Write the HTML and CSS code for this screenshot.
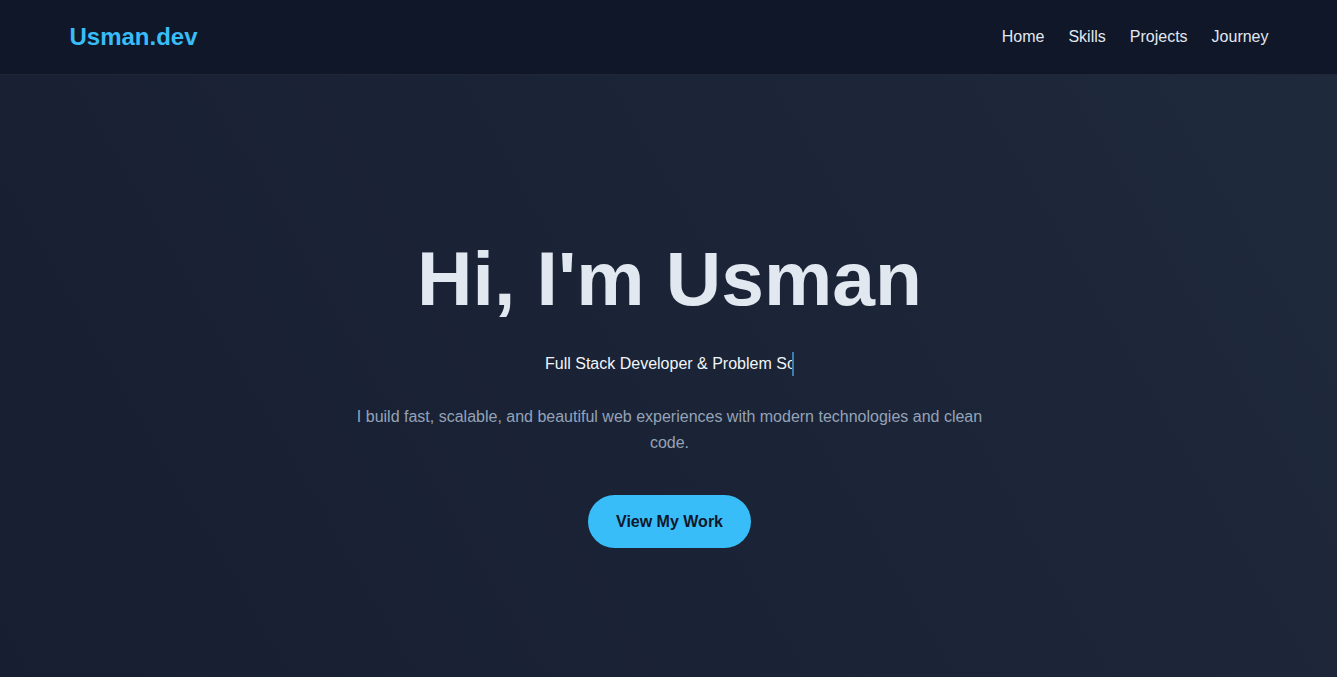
FILE: index.html
```html
<!DOCTYPE html>
<html lang="en">
<head>
    <meta charset="UTF-8">
    <meta name="viewport" content="width=device-width, initial-scale=1.0">
    <title>Usman.dev</title>
    <link rel="stylesheet" href="styles.css">
</head>
<body>
    <header class="site-header">
        <div class="container header-inner">
            <a href="#home" class="logo">Usman.dev</a>
            <nav class="nav">
                <a href="#home">Home</a>
                <a href="#skills">Skills</a>
                <a href="#projects">Projects</a>
                <a href="#journey">Journey</a>
            </nav>
        </div>
    </header>

    <main>
        <section id="home" class="hero">
            <h1 class="hero-title">Hi, I'm Usman</h1>
            <p class="hero-role"><span class="typing">Full Stack Developer &amp; Problem Solver</span></p>
            <p class="hero-text">I build fast, scalable, and beautiful web experiences with modern technologies and clean code.</p>
            <a href="#projects" class="btn">View My Work</a>
        </section>
    </main>
</body>
</html>
```

FILE: styles.css
```css
* {
    box-sizing: border-box;
}

body {
    margin: 0;
    font-family: "Liberation Sans", Arial, sans-serif;
    color: #e2e8f0;
    background: linear-gradient(60deg, #171e32 0%, #1b2336 50%, #1f2a3c 100%);
    min-height: 100vh;
}

a {
    text-decoration: none;
    color: inherit;
}

.container {
    max-width: 1200px;
    margin: 0 auto;
}

/* Header */
.site-header {
    background-color: #0f1729;
    border-bottom: 1px solid #1e2638;
}

.header-inner {
    height: 74px;
    display: flex;
    align-items: center;
    justify-content: space-between;
    padding: 0 0 0 1px;
}

.logo {
    font-size: 24px;
    font-weight: bold;
    color: #38bdf8;
}

.nav {
    display: flex;
    gap: 24px;
}

.nav a {
    font-size: 16px;
    color: #e2e8f0;
}

/* Hero */
.hero {
    display: flex;
    flex-direction: column;
    align-items: center;
    text-align: center;
    padding: 157px 18px 129px 20px;
}

.hero-title {
    margin: 0;
    font-size: 76.8px;
    line-height: 1.2;
    font-weight: bold;
    color: #e2e8f0;
}

.hero-role {
    margin: 28px 0 0;
    font-size: 16px;
    line-height: 24px;
    color: #f1f5f9;
}

.typing {
    display: inline-block;
    width: 249px;
    white-space: nowrap;
    overflow: hidden;
    vertical-align: top;
    text-align: left;
    border-right: 2px solid #3b7fae;
}

.hero-text {
    margin: 28px 0 0;
    max-width: 640px;
    font-size: 16px;
    line-height: 26px;
    color: #94a3b8;
}

.btn {
    margin-top: 39px;
    display: inline-block;
    padding: 17px 28px;
    font-size: 16px;
    line-height: 19px;
    font-weight: bold;
    color: #0f172a;
    background-color: #38bdf8;
    border-radius: 30px;
}
```
